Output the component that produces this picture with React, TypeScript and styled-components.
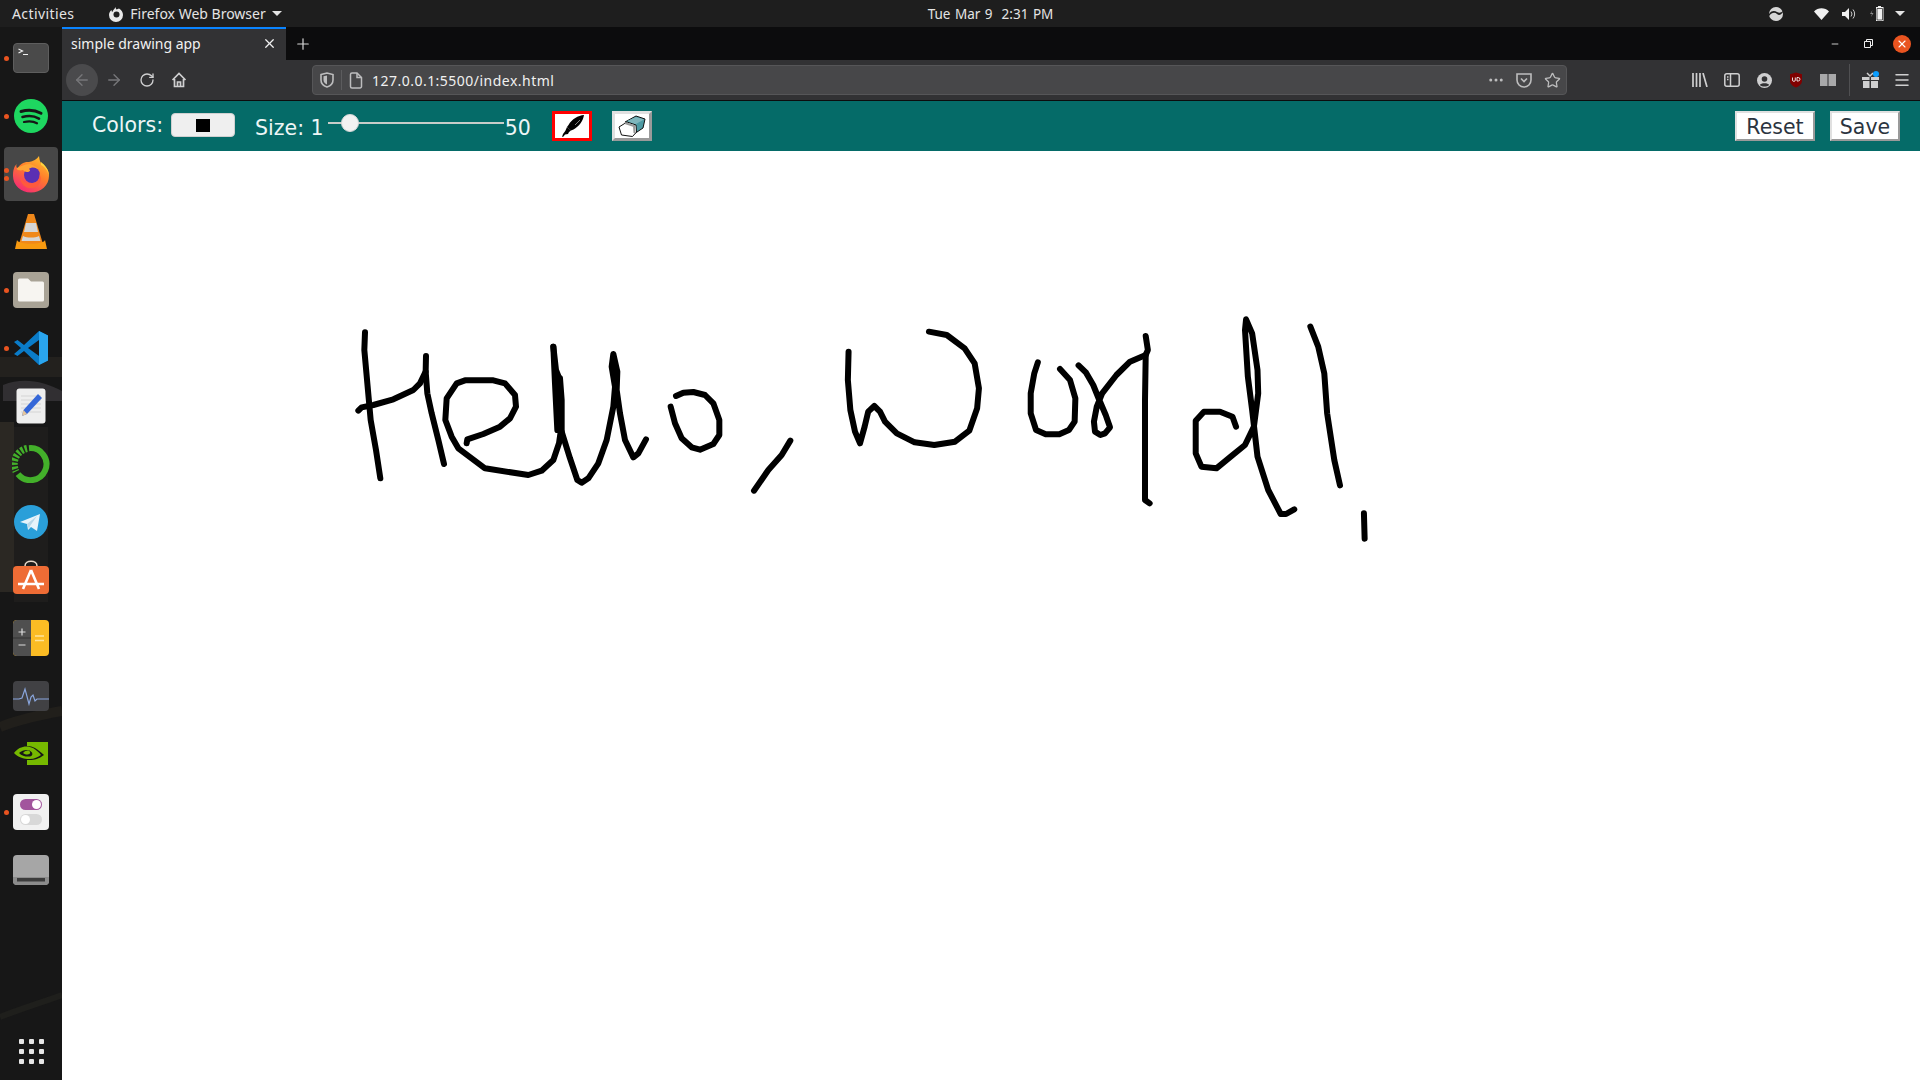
import React from "react";
import styled, { createGlobalStyle } from "styled-components";
import {
  ArrowLeft,
  ArrowRight,
  RotateCw,
  Plus,
  X,
  Minus,
  Ellipsis,
  Star,
  Menu,
} from "lucide-react";

const GlobalStyle = createGlobalStyle`
  html, body { margin: 0; padding: 0; height: 100%; overflow: hidden; background: #fff; }
  #root { height: 100%; }
  * { box-sizing: border-box; }
`;

const Screen = styled.div`
  width: 1920px;
  height: 1080px;
  display: flex;
  flex-direction: column;
  font-family: "Noto Sans", "Open Sans", sans-serif;
`;

/* gnome top bar */
const TopBar = styled.div`
  height: 27px;
  flex: none;
  background: #1e1e1e;
  color: #e4e4e4;
  font-size: 14px;
  display: grid;
  grid-template-columns: 1fr auto 1fr;
  align-items: center;
  padding: 0 0 0 12px;
`;

const TopLeft = styled.div`
  display: flex;
  align-items: center;
`;

const Activities = styled.span`
  letter-spacing: 0.4px;
`;

const AppMenu = styled.div`
  display: flex;
  align-items: center;
  gap: 6px;
  margin-left: 34px;
`;

const Caret = styled.span`
  width: 0;
  height: 0;
  border-left: 5px solid transparent;
  border-right: 5px solid transparent;
  border-top: 5px solid #e4e4e4;
`;

const Clock = styled.div`
  font-size: 13.5px;
  word-spacing: 1px;
  margin-left: 49px;
`;

const TopRight = styled.div`
  display: flex;
  justify-content: flex-end;
  align-items: center;
  padding-right: 15px;
`;

const TraySlot = styled.span<{ $gap: number }>`
  display: flex;
  margin-left: ${(p) => p.$gap}px;
`;

const Main = styled.div`
  flex: 1;
  display: flex;
  min-height: 0;
`;

/* launcher */
const Dock = styled.div`
  position: relative;
  width: 62px;
  flex: none;
  background: #171717;
  display: flex;
  flex-direction: column;
  padding-top: 2px;
  overflow: hidden;
`;

const Wallpaper = styled.svg`
  position: absolute;
  left: 0;
  top: 0;
`;

const DockItem = styled.div<{ $active?: boolean }>`
  position: relative;
  height: 58px;
  flex: none;
  display: flex;
  align-items: center;
  justify-content: center;
  &::before {
    content: "";
    position: absolute;
    left: 4px;
    top: 2px;
    width: 54px;
    height: 54px;
    border-radius: 4px;
    background: ${(p) => (p.$active ? "#474747" : "transparent")};
  }
  svg {
    position: relative;
  }
`;

const RunningDot = styled.span<{ $y?: number }>`
  position: absolute;
  left: 4px;
  top: ${(p) => p.$y ?? 27}px;
  width: 5px;
  height: 5px;
  border-radius: 50%;
  background: #e95420;
  z-index: 1;
`;

const DockBottom = styled.div`
  margin-top: auto;
  height: 58px;
  position: relative;
  display: flex;
  align-items: center;
  justify-content: center;
`;

const AppGrid = styled.div`
  display: grid;
  grid-template-columns: repeat(3, 5px);
  gap: 5px;
  span {
    width: 5px;
    height: 5px;
    border-radius: 1px;
    background: #e6e6e6;
  }
`;

/* firefox window */
const Browser = styled.div`
  flex: 1;
  display: flex;
  flex-direction: column;
  min-width: 0;
`;

const TabStrip = styled.div`
  height: 33px;
  flex: none;
  background: #0c0c0d;
  display: flex;
  align-items: center;
`;

const Tab = styled.div`
  width: 224px;
  height: 33px;
  background: #323234;
  border-top: 2px solid #0a84ff;
  color: #f1f1f1;
  font-size: 14px;
  display: flex;
  align-items: center;
  justify-content: space-between;
  padding: 0 9px 2px 9px;
`;

const NewTab = styled.div`
  width: 34px;
  display: flex;
  justify-content: center;
  color: #d8d8d8;
`;

const WindowControls = styled.div`
  margin-left: auto;
  display: flex;
  align-items: center;
  gap: 24px;
  padding-right: 9px;
  color: #eee;
`;

const CloseDot = styled.div`
  width: 18px;
  height: 18px;
  margin-left: -4px;
  border-radius: 50%;
  background: #e95420;
  display: flex;
  align-items: center;
  justify-content: center;
  color: #fff;
`;

const NavBar = styled.div`
  height: 41px;
  flex: none;
  background: #323234;
  border-bottom: 1px solid #0c0c0d;
  display: flex;
  align-items: center;
  padding-left: 4px;
`;

const NavSlot = styled.div<{ $bg?: boolean; $dim?: boolean }>`
  width: 32px;
  height: 32px;
  flex: none;
  border-radius: 50%;
  display: flex;
  align-items: center;
  justify-content: center;
  background: ${(p) => (p.$bg ? "#4a4a4c" : "transparent")};
  color: ${(p) => (p.$dim ? "#77777a" : "#cfcfd0")};
`;

const ReloadSlot = styled(NavSlot)`
  margin-left: 1px;
`;

const UrlBar = styled.div`
  width: 1255px;
  height: 30px;
  margin-left: 117px;
  flex: none;
  background: #474749;
  border: 1px solid #565658;
  border-radius: 4px;
  display: flex;
  align-items: center;
  color: #f0f0f0;
  font-size: 14px;
`;

const UrlIcon = styled.div`
  width: 28px;
  display: flex;
  justify-content: center;
  color: #bdbdbe;
  flex: none;
`;

const UrlDivider = styled.span`
  width: 1px;
  height: 20px;
  background: #5c5c5e;
`;

const UrlText = styled.span`
  flex: 1;
  margin-left: 2px;
  letter-spacing: 0.48px;
`;

const NavSpacer = styled.div`
  width: 117px;
  flex: none;
`;

const NavDivider = styled.span`
  width: 1px;
  height: 32px;
  margin: 0 4px 0 5px;
  background: #505052;
`;

/* the page itself */
const AppToolbar = styled.div`
  height: 50px;
  flex: none;
  background: #056b68;
  color: #eef6f6;
  font-family: "DejaVu Sans", Verdana, sans-serif;
  font-size: 20.5px;
  display: flex;
  align-items: center;
  padding: 0 20px 0 30px;
`;

const Label = styled.span<{ $low?: boolean; $left?: number }>`
  white-space: pre;
  margin-top: ${(p) => (p.$low ? "3px" : "-3px")};
  margin-left: ${(p) => p.$left ?? 0}px;
`;

const ColorSwatch = styled.div`
  width: 64px;
  height: 24px;
  margin: -2px 0 0 8px;
  background: #efefef;
  border: 1px solid #d0d0d0;
  border-radius: 4px;
  display: flex;
  align-items: center;
  justify-content: center;
  &::after {
    content: "";
    width: 14px;
    height: 13px;
    background: #000;
  }
`;

const SizeSlider = styled.input`
  appearance: none;
  width: 176px;
  height: 18px;
  margin: -7px 1px 0 4px;
  background: transparent;
  &::-webkit-slider-runnable-track {
    height: 2px;
    background: #c9ccc9;
  }
  &::-webkit-slider-thumb {
    appearance: none;
    width: 18px;
    height: 18px;
    margin-top: -8px;
    border-radius: 50%;
    background: #f2f2f2;
    border: 1px solid #d8d8d8;
  }
`;

const ToolButton = styled.button<{ $selected?: boolean; $left: number }>`
  width: 40px;
  height: 30px;
  padding: 0;
  margin-left: ${(p) => p.$left}px;
  background: #fff;
  border: 3px solid;
  border-color: ${(p) => (p.$selected ? "#f00" : "#e0e0e0 #9a9a9a #9a9a9a #e0e0e0")};
  display: flex;
  align-items: center;
  justify-content: center;
`;

const TextButton = styled.button<{ $width: number; $left?: string }>`
  width: ${(p) => p.$width}px;
  height: 30px;
  padding: 2px 0 0;
  margin-left: ${(p) => p.$left ?? "0"};
  background: #fff;
  color: #2b3440;
  border: 2px solid;
  border-color: #e0e0e0 #9a9a9a #9a9a9a #e0e0e0;
  font: inherit;
  display: flex;
  align-items: center;
  justify-content: center;
`;

const Canvas = styled.div`
  flex: 1;
  background: #fff;
  min-height: 0;
`;

const Ink = styled.svg`
  display: block;
  polyline {
    fill: none;
    stroke: #000;
    stroke-width: 6;
    stroke-linecap: round;
    stroke-linejoin: round;
  }
`;

type Pt = [number, number];

const helloScale = (pts: Pt[]) => pts.map(([x, y]) => `${340 + x / 3},${300 + y / 3}`).join(" ");
const worldScale = (pts: Pt[]) => pts.map(([x, y]) => `${820 + x / 2.8},${300 + y / 3}`).join(" ");

const helloStrokes: Pt[][] = [
  [[75, 97], [73, 150], [82, 250], [92, 360], [108, 450], [121, 535]],
  [[55, 332], [65, 322], [100, 315], [160, 298], [220, 270], [240, 250], [257, 215], [258, 168]],
  [[257, 215], [262, 280], [275, 340], [295, 420], [312, 492]],
  [[380, 430], [382, 418], [430, 402], [480, 380], [510, 355], [528, 320], [525, 285], [495, 250], [460, 241], [375, 241], [350, 250], [320, 295], [316, 360], [335, 410], [355, 445], [435, 505], [565, 525], [605, 512], [640, 480], [657, 430], [662, 395], [660, 300], [660, 240], [648, 210], [640, 140]],
  [[640, 140], [645, 250], [652, 390]],
  [[660, 235], [665, 300], [665, 395]],
  [[665, 395], [690, 475], [712, 540], [725, 548], [745, 535], [775, 490], [800, 420], [820, 320], [825, 260], [815, 200], [820, 162], [832, 215], [830, 270], [840, 340], [855, 420], [880, 472], [895, 460], [918, 418]],
  [[992, 320], [1005, 370], [1025, 415], [1055, 442], [1080, 449], [1120, 432], [1138, 405], [1138, 360], [1120, 310], [1095, 285], [1060, 276], [1030, 278], [1008, 288]],
  [[1351, 422], [1325, 465], [1285, 510], [1242, 572]],
];

const worldStrokes: Pt[][] = [
  [[80, 155], [78, 240], [85, 330], [98, 395], [112, 430], [125, 380], [135, 335], [152, 318], [168, 335], [182, 365], [215, 400], [265, 427], [320, 435], [378, 425], [418, 392], [440, 325], [445, 265], [433, 190], [405, 145], [355, 105], [305, 95]],
  [[610, 187], [600, 220], [590, 280], [590, 340], [605, 390], [632, 403], [670, 403], [697, 390], [713, 365], [715, 295], [700, 240], [672, 207]],
  [[724, 196], [745, 218], [765, 255], [782, 300], [800, 345], [812, 382], [798, 400], [785, 405], [770, 395], [767, 365], [775, 320], [790, 280], [830, 225], [868, 185], [912, 165]],
  [[912, 108], [918, 150], [912, 165], [910, 300], [910, 600], [923, 610]],
  [[1165, 380], [1155, 350], [1120, 335], [1075, 335], [1052, 362], [1052, 460], [1068, 500], [1110, 505], [1150, 470], [1190, 435], [1215, 380], [1227, 280], [1225, 210], [1210, 100], [1193, 58], [1190, 90], [1198, 230], [1210, 330], [1225, 470], [1255, 570], [1290, 642], [1305, 642], [1328, 628]],
  [[1373, 80], [1395, 140], [1412, 220], [1420, 340], [1440, 480], [1456, 556]],
  [[1523, 640], [1525, 716]],
];

const TerminalIcon = () => (
  <svg width="36" height="30" viewBox="0 0 36 30">
    <rect x="0.5" y="0.5" width="35" height="29" rx="3.5" fill="#4a4a4a" stroke="#5e5e5e" />
    <path d="M5.5 6l4 2-4 2M10 11.5h5" stroke="#f0f0f0" strokeWidth="1.2" fill="none" />
  </svg>
);

const SpotifyIcon = () => (
  <svg width="34" height="34" viewBox="0 0 34 34">
    <circle cx="17" cy="17" r="17" fill="#1ed760" />
    <path d="M7 12.5c7-2 14-1.500 20 1.800" stroke="#161616" strokeWidth="3" strokeLinecap="round" fill="none" />
    <path d="M8.500 18c6-1.600 12-1 16.500 1.600" stroke="#161616" strokeWidth="2.600" strokeLinecap="round" fill="none" />
    <path d="M10 23c5-1.200 9.500-.8 13 1.300" stroke="#161616" strokeWidth="2.200" strokeLinecap="round" fill="none" />
  </svg>
);

const FirefoxIcon = () => (
  <svg width="38" height="38" viewBox="0 0 38 38">
    <defs>
      <linearGradient id="ffBody" x1="0.8" y1="0" x2="0.2" y2="1">
        <stop offset="0" stopColor="#ffc02e" />
        <stop offset="0.45" stopColor="#ff7a2c" />
        <stop offset="1" stopColor="#f5247a" />
      </linearGradient>
    </defs>
    <path d="M27 1c.5 3 .5 5 2.500 7.500C34 11 37 15 37 21c0 9-8 16.500-18 16.500S1 30 1 21C1 15 2 12 4.500 9c-.5 2.500 0 3.500 1 4.500C8 9 12 6.500 17 7c4-1 8-2.500 10-6z" fill="url(#ffBody)" />
    <path d="M29 7c4 3 8 8 8 14-1-5-4-9-8-11z" fill="#ffd43f" />
    <circle cx="20" cy="20" r="8" fill="#5a2fb3" />
    <path d="M11 15c-3 1-7 0-6-2 4-2 9-4 13-4 3 1 7 3 8 5-3-2-7-2-9 0 2 1 1 3-2 3-2 0-3-1-4-2z" fill="#ffa436" />
    <path d="M8 22c3 6 10 8 16 5 3-2 4-6 3-9 3 5 2 11-3 14-7 3-15 0-16-10z" fill="#ff5a3c" />
  </svg>
);

const VlcIcon = () => (
  <svg width="32" height="38" viewBox="0 0 32 38">
    <path d="M13 1h6l9 30H4z" fill="#f0881a" />
    <path d="M11 10h10l2 9H9z" fill="#d6d6d6" />
    <path d="M8 23c4 2 12 2 16 0l1.500 5H6.500z" fill="#d6d6d6" />
    <path d="M2 27l-2 9h32l-2-9c-2 5-26 5-28 0z" fill="#f79a10" />
  </svg>
);

const FilesIcon = () => (
  <svg width="36" height="36" viewBox="0 0 36 36">
    <rect width="36" height="36" rx="4" fill="#a9a396" />
    <path d="M5 8a1.500 1.500 0 0 1 1.500-1.500H15l3 3h11.500A1.500 1.500 0 0 1 31 11v17a1.500 1.500 0 0 1-1.500 1.500h-23A1.500 1.500 0 0 1 5 28z" fill="#f7f5f1" />
  </svg>
);

const VscodeIcon = () => (
  <svg width="36" height="36" viewBox="0 0 36 36">
    <path d="M26 1l9 4.500v25L26 35 11 21l-6.500 5L1 24l7-6-7-6 3.500-2L11 15z" fill="#0a7cc9" />
    <path d="M26 1l9 4.500v25L26 35z" fill="#2aa5ee" />
    <path d="M26 10L15 18l11 8z" fill="#171717" />
  </svg>
);

const EditorIcon = () => (
  <svg width="30" height="36" viewBox="0 0 30 36">
    <rect width="29" height="35" x="0.500" y="0.500" rx="3" fill="#eeeeee" />
    <path d="M5 8h20M5 12h20M5 16h20M5 20h20M5 24h20" stroke="#d4d4d4" />
    <path d="M22 6l4 4-15 16-5 2 1.500-6z" fill="#3567d8" />
    <path d="M7.500 22l3.500 4-5 2z" fill="#e6c69a" />
  </svg>
);

const AnacondaIcon = () => (
  <svg width="38" height="38" viewBox="0 0 38 38">
    <path d="M17 3.200a16 16 0 1 1-11 26" fill="none" stroke="#43b02a" strokeWidth="6" />
    <path d="M15 3.500a16 16 0 0 0-11 23" fill="none" stroke="#43b02a" strokeWidth="7" strokeDasharray="2.500 1.500" />
  </svg>
);

const TelegramIcon = () => (
  <svg width="34" height="34" viewBox="0 0 34 34">
    <circle cx="17" cy="17" r="17" fill="#2a9fd9" />
    <path d="M6 17l20-8-3 17-6-4-3 3-1-6z" fill="#e6f3fa" />
    <path d="M13 19l10-8-7 10-1 3z" fill="#b8d7e8" />
  </svg>
);

const StoreIcon = () => (
  <svg width="36" height="40" viewBox="0 0 36 40">
    <path d="M12 6c0-6.500 12-6.500 12 0" fill="none" stroke="#e8d8c8" strokeWidth="1.500" />
    <rect y="6" width="36" height="28" rx="4" fill="#ee6c35" />
    <path d="M18 10l8 19M18 10l-8 19M5 24h26" stroke="#fff" strokeWidth="2.600" fill="none" />
  </svg>
);

const CalcIcon = () => (
  <svg width="36" height="36" viewBox="0 0 36 36">
    <rect width="36" height="36" rx="4" fill="#fbbc24" />
    <path d="M4 0h14v36H4a4 4 0 0 1-4-4V4a4 4 0 0 1 4-4z" fill="#4f4f4f" />
    <path d="M0 18h18" stroke="#343434" />
    <path d="M5.500 12h7M9 8.500v7M5.500 25h7" stroke="#dcdcdc" strokeWidth="1.200" />
    <path d="M22 16h9M22 20.500h9" stroke="#ffe49a" strokeWidth="1.500" />
  </svg>
);

const MonitorIcon = () => (
  <svg width="36" height="30" viewBox="0 0 36 30">
    <rect width="36" height="30" rx="4" fill="#414144" />
    <path d="M0 18h6l3-1 3-9 4 15 2-7 2-2 2 6 2-2h12" stroke="#8aa6dd" strokeWidth="1.200" fill="none" />
  </svg>
);

const NvidiaIcon = () => (
  <svg width="34" height="24" viewBox="0 0 34 24">
    <path d="M13 0h21v23H13z" fill="#76b900" />
    <path d="M0 11C5 4 14 2 21 6c3 2 6 4 9 7-5 4-10 5-14 5C9 18 4 16 0 11z" fill="#171717" />
    <path d="M0 11C5 4 13 3 19 6c3 2 6 4 8 7-3 2-7 4-11 4C9 17 4 15 0 11zm5 0c3 3 7 4 11 3.500 2-.5 3-2 2-4-3-4-9-3-13 .5z" fill="#76b900" />
    <path d="M9 11c3-3 6-3 7-1 1 2-3 4-7 1z" fill="#76b900" />
  </svg>
);

const TweaksIcon = () => (
  <svg width="36" height="36" viewBox="0 0 36 36">
    <rect width="36" height="36" rx="4" fill="#f1f1f1" />
    <rect x="7" y="5" width="22" height="11" rx="5.500" fill="#a2559d" />
    <circle cx="23.500" cy="10.500" r="4.500" fill="#fff" />
    <rect x="7" y="20" width="22" height="11" rx="5.500" fill="#d8d8d8" />
    <circle cx="12.500" cy="25.500" r="4.500" fill="#fff" />
  </svg>
);

const DiskIcon = () => (
  <svg width="36" height="30" viewBox="0 0 36 30">
    <rect width="36" height="30" rx="4" fill="#a6a6a6" />
    <path d="M0 22h36v4a4 4 0 0 1-4 4H4a4 4 0 0 1-4-4z" fill="#8c8c8c" />
    <rect x="4" y="23" width="28" height="3.500" fill="#3c3c3c" />
  </svg>
);

const FirefoxGlyph = () => (
  <svg width="16" height="16" viewBox="0 0 16 16">
    <path d="M8 1c-.5 1.500 0 2 .5 2.500L11 2.500C13.500 4 15 6 15 9a7 7 0 1 1-14 0c0-2 1-3.800 2.500-5 0 1 .3 1.600.8 2C5 4.500 6.500 2.500 8 1z" fill="#e8e8e8" />
    <circle cx="8.500" cy="8.500" r="3" fill="#1e1e1e" />
  </svg>
);

const WorldGlyph = () => (
  <svg width="14" height="14" viewBox="0 0 14 14">
    <circle cx="7" cy="7" r="7" fill="#d6d6d6" />
    <path d="M0 9c3-4 6-4 8-2s4 1 6-2v-1c-2 2-4 2-6 1S3 3 0 7z" fill="#1e1e1e" />
  </svg>
);

const WifiGlyph = () => (
  <svg width="15" height="12" viewBox="0 0 15 12">
    <path d="M0 3.500C4-.8 11-.8 15 3.500L7.500 12z" fill="#f0f0f0" />
  </svg>
);

const VolumeGlyph = () => (
  <svg width="15" height="12" viewBox="0 0 15 12">
    <path d="M0 4h3l4-4v12L3 8H0z" fill="#f0f0f0" />
    <path d="M9 3.500a4 4 0 0 1 0 5M11 1.500a7 7 0 0 1 0 9" stroke="#cfcfcf" fill="none" />
  </svg>
);

const BatteryGlyph = () => (
  <svg width="15" height="15" viewBox="0 0 15 15">
    <path d="M2.500 4L0 8h2l-1 3 2.500-4h-2z" fill="#8a8a8a" />
    <path d="M8 1V0h3v1h2.500v14H6V1z" fill="#f0f0f0" />
    <path d="M7 2.500h5.500v11.500H7z" fill="#f0f0f0" stroke="#1e1e1e" strokeWidth="0.700" />
  </svg>
);

const HomeGlyph = () => (
  <svg width="16" height="16" viewBox="0 0 16 16" fill="none" stroke="currentColor" strokeWidth="1.700">
    <path d="M1.500 8L8 1.500 14.500 8M3.500 7v7.500h9V7" />
    <path d="M6.500 14.500V10h3v4.500" />
  </svg>
);

const ShieldGlyph = () => (
  <svg width="14" height="16" viewBox="0 0 14 16" fill="none" stroke="currentColor" strokeWidth="1.600">
    <path d="M1 2.500L7 1l6 1.500V8c0 3.500-3 6-6 7-3-1-6-3.500-6-7z" />
    <path d="M7 3.500v9C5 11.500 3.500 10 3.500 8V4.300z" fill="currentColor" stroke="none" />
  </svg>
);

const PageGlyph = () => (
  <svg width="14" height="17" viewBox="0 0 14 17" fill="none" stroke="currentColor" strokeWidth="1.500">
    <path d="M1.500 2.500a1.500 1.500 0 0 1 1.500-1.500h5l4.500 4.500v9a1.500 1.500 0 0 1-1.500 1.500H3A1.500 1.500 0 0 1 1.500 14.500z" />
    <path d="M8 1v4.500h4.500" />
  </svg>
);

const PocketGlyph = () => (
  <svg width="16" height="15" viewBox="0 0 16 15" fill="none" stroke="#bdbdbe" strokeWidth="1.600">
    <path d="M1 1h14v6a7 7 0 0 1-14 0z" />
    <path d="M5 5.500l3 3 3-3" />
  </svg>
);

const LibraryGlyph = () => (
  <svg width="16" height="14" viewBox="0 0 16 14" stroke="#cfcfd0" strokeWidth="1.700" fill="none">
    <path d="M1 0v14M4.500 0v14M8 0v14M11 0l4 14" />
  </svg>
);

const SidebarGlyph = () => (
  <svg width="16" height="14" viewBox="0 0 16 14" fill="none" stroke="#cfcfd0" strokeWidth="1.500">
    <rect x="0.800" y="0.800" width="14.400" height="12.400" rx="2" />
    <path d="M6.500 1v12M3 4h1.500M3 6.500h1.500" />
  </svg>
);

const AccountGlyph = () => (
  <svg width="15" height="15" viewBox="0 0 15 15">
    <circle cx="7.500" cy="7.500" r="7.500" fill="#cfcfd0" />
    <circle cx="7.500" cy="6" r="2.800" fill="#323234" />
    <path d="M2.800 12c1-2.200 8.400-2.200 9.400 0-2.500 2-7 2-9.400 0z" fill="#323234" />
  </svg>
);

const UblockGlyph = () => (
  <svg width="14" height="16" viewBox="0 0 14 16">
    <path d="M1 2.200L7 .5l6 1.700V9c0 3-3 5.500-6 6.500C4 14.500 1 12 1 9z" fill="#800000" />
    <path d="M3.500 5.500v2.500a1.400 1.400 0 0 0 2.800 0V5.500M8 5.500v3.500h1.200a1.700 1.700 0 0 0 0-3.500z" stroke="#f2f2f2" strokeWidth="0.900" fill="none" />
  </svg>
);

const ReaderGlyph = () => (
  <svg width="16" height="14" viewBox="0 0 16 14">
    <path d="M0 1h7v12H0zM9 1h7v12H9z" fill="#a8a8a9" />
    <path d="M7 1c.5 0 1.500 0 2 0v12H7z" fill="#6a6a6c" />
  </svg>
);

const GiftGlyph = () => (
  <svg width="17" height="18" viewBox="0 0 17 18">
    <path d="M0 6h7.500v3H0zM9 6h8v3H9zM1 10h6.500v7H1zM9 10h7v7H9z" fill="#cfcfd0" />
    <path d="M5 2l3 3 3-3" fill="none" stroke="#cfcfd0" strokeWidth="1.500" />
    <circle cx="14" cy="3" r="3" fill="#0a9dff" />
  </svg>
);

const RestoreGlyph = () => (
  <svg width="9" height="9" viewBox="0 0 9 9" fill="none" stroke="#eee">
    <path d="M0.500 2.500h6v6h-6zM2.500 2.500v-2h6v6h-2" />
  </svg>
);

const PenGlyph = () => (
  <svg width="26" height="24" viewBox="0 0 26 24">
    <path d="M25 1C19 1.500 13 5 9.500 11L8 13l4 3.500 2.500-1C20 12.500 24 7 25 1z" fill="#000" />
    <path d="M8 13l4 3.500-2 1.500-1 2-3 .5-1.500 2L3 23l1-3 1.500-2 1-1.500z" fill="#000" />
    <path d="M21 6l-5 5" stroke="#fff" strokeWidth="0.500" />
  </svg>
);

const EraserGlyph = () => (
  <svg width="30" height="22" viewBox="0 0 30 22">
    <path d="M8 7L19 1l9 3-2 9-9 6z" fill="#4d9aa3" stroke="#111" />
    <path d="M10 6l9-4 8 2.500-9 5z" fill="#7fb6bc" />
    <path d="M2 12l8-5 9 3 .5 7-4 4.500-11-1.500z" fill="#fff" stroke="#111" />
    <path d="M8 8l9 3 .5 7" fill="none" stroke="#999" strokeWidth="2" />
  </svg>
);

const WallpaperLines = () => (
  <Wallpaper width="62" height="1053" viewBox="0 0 62 1053">
    <path d="M0 330h62v20H0z" fill="#3a352c" opacity="0.35" />
    <path d="M3 358c20-8 40-4 59 6v10H3z" fill="#4b474d" opacity="0.5" />
    <path d="M0 395h14v170H0z" fill="#3f3a30" opacity="0.5" />
    <path d="M14 400h34v175H14z" fill="#232220" opacity="0.6" />
    <path d="M0 700c20-8 40-12 62-16" stroke="#211f1b" strokeWidth="10" fill="none" />
    <path d="M0 990c20-8 40-14 62-22" stroke="#1f1f1c" strokeWidth="6" fill="none" />
  </Wallpaper>
);

const dockApps: { icon: React.ReactNode; dots?: number[]; active?: boolean }[] = [
  { icon: <TerminalIcon />, dots: [27] },
  { icon: <SpotifyIcon />, dots: [27] },
  { icon: <FirefoxIcon />, dots: [23, 31], active: true },
  { icon: <VlcIcon /> },
  { icon: <FilesIcon />, dots: [27] },
  { icon: <VscodeIcon />, dots: [27] },
  { icon: <EditorIcon /> },
  { icon: <AnacondaIcon /> },
  { icon: <TelegramIcon /> },
  { icon: <StoreIcon /> },
  { icon: <CalcIcon /> },
  { icon: <MonitorIcon /> },
  { icon: <NvidiaIcon /> },
  { icon: <TweaksIcon />, dots: [27] },
  { icon: <DiskIcon /> },
];

export default function App() {
  return (
    <Screen>
      <GlobalStyle />
      <TopBar>
        <TopLeft>
          <Activities>Activities</Activities>
          <AppMenu>
            <FirefoxGlyph />
            Firefox Web Browser
            <Caret />
          </AppMenu>
        </TopLeft>
        <Clock>Tue Mar 9&nbsp;&nbsp;2:31 PM</Clock>
        <TopRight>
          <WorldGlyph />
          <TraySlot $gap={31}><WifiGlyph /></TraySlot>
          <TraySlot $gap={13}><VolumeGlyph /></TraySlot>
          <TraySlot $gap={13}><BatteryGlyph /></TraySlot>
          <TraySlot $gap={10}><Caret /></TraySlot>
        </TopRight>
      </TopBar>
      <Main>
        <Dock>
          <WallpaperLines />
          {dockApps.map((app, i) => (
            <DockItem key={i} $active={app.active}>
              {app.dots?.map((y) => <RunningDot key={y} $y={y} />)}
              {app.icon}
            </DockItem>
          ))}
          <DockBottom>
            <AppGrid>
              {Array.from({ length: 9 }).map((_, i) => (
                <span key={i} />
              ))}
            </AppGrid>
          </DockBottom>
        </Dock>
        <Browser>
          <TabStrip>
            <Tab>
              simple drawing app
              <X size={15} strokeWidth={2} />
            </Tab>
            <NewTab>
              <Plus size={18} strokeWidth={1.6} />
            </NewTab>
            <WindowControls>
              <Minus size={10} />
              <RestoreGlyph />
              <CloseDot>
                <X size={12} strokeWidth={2.2} />
              </CloseDot>
            </WindowControls>
          </TabStrip>
          <NavBar>
            <NavSlot $bg $dim>
              <ArrowLeft size={18} strokeWidth={1.8} />
            </NavSlot>
            <NavSlot $dim>
              <ArrowRight size={18} strokeWidth={1.8} />
            </NavSlot>
            <ReloadSlot>
              <RotateCw size={16} strokeWidth={2} />
            </ReloadSlot>
            <NavSlot>
              <HomeGlyph />
            </NavSlot>
            <UrlBar>
              <UrlIcon>
                <ShieldGlyph />
              </UrlIcon>
              <UrlDivider />
              <UrlIcon>
                <PageGlyph />
              </UrlIcon>
              <UrlText>127.0.0.1:5500/index.html</UrlText>
              <UrlIcon>
                <Ellipsis size={18} />
              </UrlIcon>
              <UrlIcon>
                <PocketGlyph />
              </UrlIcon>
              <UrlIcon>
                <Star size={17} strokeWidth={1.8} />
              </UrlIcon>
            </UrlBar>
            <NavSpacer />
            <NavSlot><LibraryGlyph /></NavSlot>
            <NavSlot><SidebarGlyph /></NavSlot>
            <NavSlot><AccountGlyph /></NavSlot>
            <NavSlot><UblockGlyph /></NavSlot>
            <NavSlot><ReaderGlyph /></NavSlot>
            <NavDivider />
            <NavSlot><GiftGlyph /></NavSlot>
            <NavSlot><Menu size={18} strokeWidth={2} /></NavSlot>
          </NavBar>
          <AppToolbar>
            <Label>Colors:</Label>
            <ColorSwatch />
            <Label $low $left={20}>Size: 1</Label>
            <SizeSlider type="range" min={1} max={50} defaultValue={5} />
            <Label $low>50</Label>
            <ToolButton $selected $left={21}><PenGlyph /></ToolButton>
            <ToolButton $left={20}><EraserGlyph /></ToolButton>
            <TextButton $width={80} $left="auto">Reset</TextButton>
            <TextButton $width={70} $left="15px">Save</TextButton>
          </AppToolbar>
          <Canvas>
            <Ink width="1858" height="929" viewBox="62 151 1858 929">
              {helloStrokes.map((s, i) => (
                <polyline key={i} points={helloScale(s)} />
              ))}
              {worldStrokes.map((s, i) => (
                <polyline key={i} points={worldScale(s)} />
              ))}
            </Ink>
          </Canvas>
        </Browser>
      </Main>
    </Screen>
  );
}
